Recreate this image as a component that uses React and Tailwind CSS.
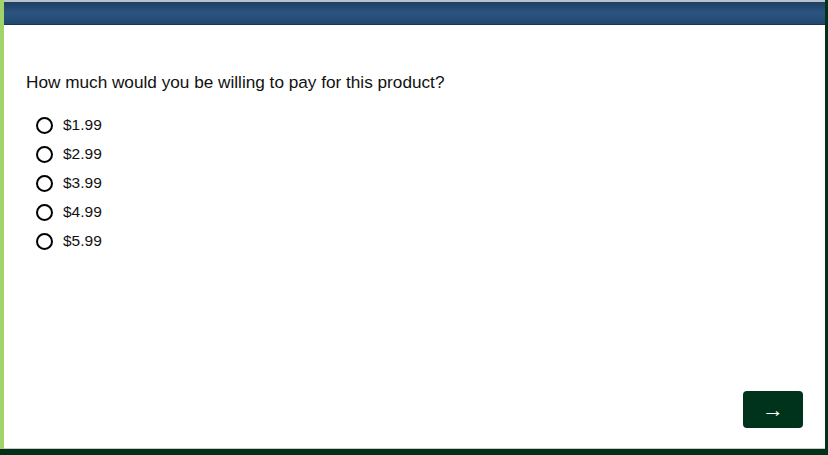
import React from 'react';

const options = ['$1.99', '$2.99', '$3.99', '$4.99', '$5.99'];

const App = () => {
  return (
    <div className="w-[828px] h-[455px] flex flex-col bg-white font-['Liberation_Sans',Arial,sans-serif] overflow-hidden">
      <div className="flex-1 flex min-h-0">
        {/* Left accent */}
        <div className="w-[4px] bg-[#a0d46a]" />

        {/* Main */}
        <div className="flex-1 flex flex-col min-w-0">
          {/* Header bar */}
          <div className="h-[2px] bg-[#b7c2cc]" />
          <div className="h-[23px] bg-gradient-to-b from-[#1f3e63] via-[#2a5580] to-[#224870] border-b border-[#183654]" />

          <div className="flex-1 flex flex-col px-[22px] pt-[47px] pb-[20px]">
            <p className="text-[17.2px] text-[#111] leading-[20px]">
              How much would you be willing to pay for this product?
            </p>

            <div className="flex flex-col mt-[24px] pl-[10px] gap-[11px]">
              {options.map((opt) => (
                <label key={opt} className="flex items-center gap-[10px] h-[18px]">
                  <span className="w-[17px] h-[17px] rounded-full border-2 border-black bg-white" />
                  <span className="text-[15.5px] text-[#111]">{opt}</span>
                </label>
              ))}
            </div>

            <div className="mt-auto flex justify-end">
              <button className="w-[60px] h-[37px] rounded-[4px] bg-[#00331b] text-white text-[22px] flex items-center justify-center">
                →
              </button>
            </div>
          </div>
          <div className="h-[1px] bg-[#c8ccc9]" />
        </div>

        {/* Right border */}
        <div className="w-[3px] bg-[#03301a]" />
      </div>
      <div className="h-[6px] bg-[#03301a]" />
    </div>
  );
};

export default App;
